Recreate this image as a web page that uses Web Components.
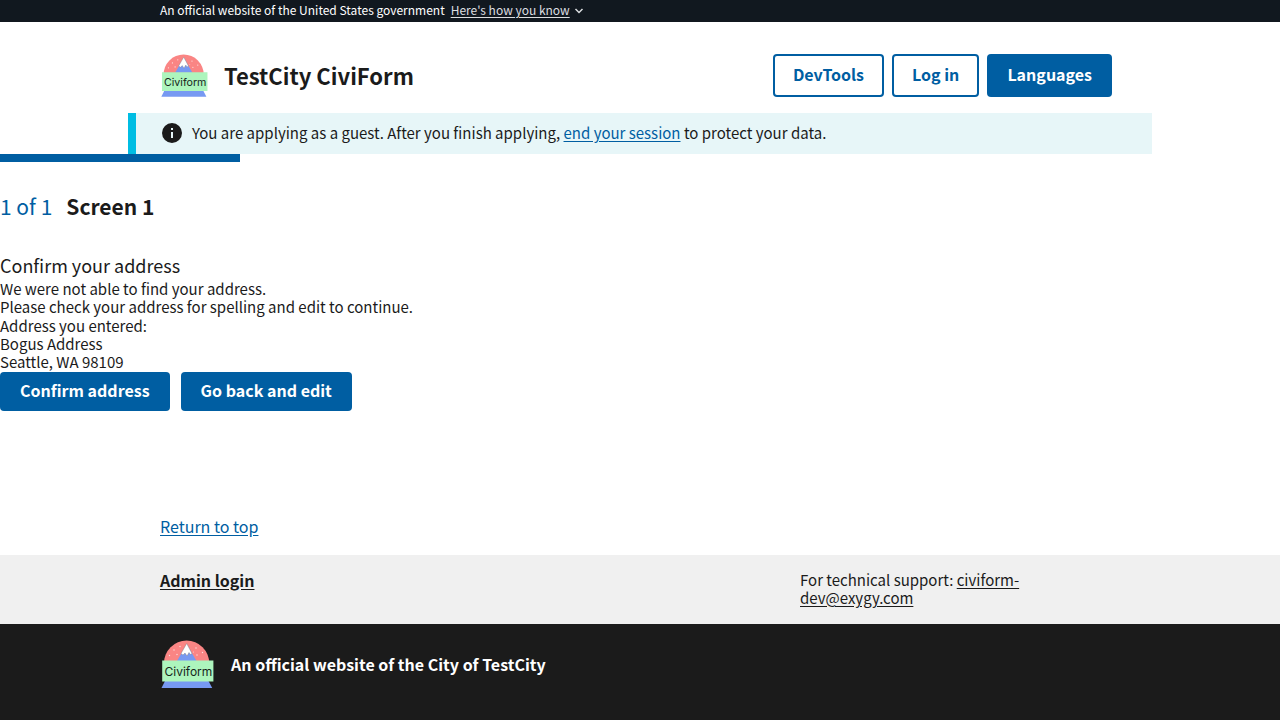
<!DOCTYPE html>
<html lang="en">
<head>
<meta charset="utf-8">
<meta name="viewport" content="width=device-width, initial-scale=1">
<title>TestCity CiviForm</title>
<style>
  html { --primary: #005ea2; --ink: #1b1b1b; }
  body {
    margin: 0;
    color: var(--ink);
    background: #fff;
    font: 15px/18px "Noto Sans CJK JP", "Noto Sans", sans-serif;
  }
</style>
</head>
<body>
<civi-page>
  <gov-banner slot="banner"></gov-banner>
  <site-header slot="header" name="TestCity CiviForm">
    <civi-button outline>DevTools</civi-button>
    <civi-button outline>Log in</civi-button>
    <civi-button>Languages</civi-button>
  </site-header>
  <guest-alert slot="alert"></guest-alert>
  <step-progress current="1" total="1" name="Screen 1"></step-progress>
  <address-confirm>
    <span slot="street">Bogus Address</span>
    <span slot="city">Seattle, WA 98109</span>
  </address-confirm>
  <site-footer slot="footer"></site-footer>
</civi-page>

<script>
function define(name, html) {
  const template = document.createElement('template');
  template.innerHTML = html;
  customElements.define(name, class extends HTMLElement {
    constructor() {
      super();
      const root = this.attachShadow({ mode: 'open' });
      root.append(template.content.cloneNode(true));
      root.querySelectorAll('[data-attr]').forEach(node => {
        node.textContent = this.getAttribute(node.dataset.attr) || '';
      });
    }
  });
}

define('civi-logo', `
  <style>
    :host { display: block; flex: none; width: 48px; }
    svg { display: block; width: 100%; }
    text { font: 12px Inter, sans-serif; fill: #17251c; }
  </style>
  <svg viewBox="0 0 54 48" role="img" aria-label="CiviForm logo">
    <circle cx="26.6" cy="23.2" r="22.6" fill="#fa8584"/>
    <g fill="#fde0df">
      <circle cx="20" cy="6.5" r=".7"/><circle cx="14" cy="10" r=".7"/>
      <circle cx="17" cy="14.5" r=".7"/><circle cx="9.5" cy="15.5" r=".7"/>
      <circle cx="36" cy="8" r=".7"/><circle cx="42.5" cy="12.5" r=".7"/>
      <circle cx="37" cy="15" r=".7"/><circle cx="33.5" cy="12" r=".5"/>
    </g>
    <path d="M26.7 4 17 21h19.500z" fill="#7799f2"/>
    <path d="M26.700 3.500 21 13.500l2 1.500 2-2 2 3 2-3.500 1.500 2 1.500-1z" fill="#fff" stroke="#777" stroke-width=".4"/>
    <path d="M5.500 40h42.500l4.200 8H1.500z" fill="#7799f2"/>
    <path d="M2.200 20.500h51.200v21H2.200z" fill="#adf5bd"/>
    <text x="4.500" y="35.500">Civiform</text>
  </svg>`);

define('civi-button', `
  <style>
    :host { display: block; }
    button {
      display: block;
      padding: 11px 20px 13px;
      border: 0;
      border-radius: 4px;
      background: var(--primary);
      color: #fff;
      font: inherit;
      font-size: 16px;
      font-weight: 700;
      line-height: var(--button-line, 15px);
      white-space: nowrap;
      cursor: pointer;
    }
    :host([outline]) button {
      background: transparent;
      color: var(--primary);
      box-shadow: inset 0 0 0 2px var(--primary);
    }
  </style>
  <button type="button"><slot></slot></button>`);

define('gov-banner', `
  <style>
    :host { display: block; background: #11181f; color: #fff; font-size: 12px; line-height: 16px; }
    .inner {
      display: flex; align-items: center; gap: 6px;
      box-sizing: border-box; max-width: 1024px; margin: 0 auto; padding: 2px 32px 4px;
    }
    button {
      display: flex; align-items: center; gap: 4px;
      padding: 0; border: 0; background: none; color: #dcdee0; font: inherit; cursor: pointer;
    }
    span { text-decoration: underline; text-underline-offset: 2px; }
  </style>
  <div class="inner">
    An official website of the United States government
    <button type="button" aria-expanded="false"><span>Here's how you know</span>
      <svg width="10" height="8" viewBox="0 0 10 8" fill="none" stroke="currentColor" stroke-width="1.500" aria-hidden="true"><path d="m1.500 3 3.500 3.500L8.500 3"/></svg>
    </button>
  </div>`);

define('site-header', `
  <style>
    :host { display: block; }
    header {
      display: flex; align-items: center; justify-content: space-between; flex-wrap: wrap; gap: 16px;
      box-sizing: border-box; max-width: 1024px; margin: 0 auto; padding: 32px 40px 16px 32px;
    }
    a { display: flex; align-items: center; gap: 16px; color: inherit; text-decoration: none; }
    strong { padding-bottom: 2px; font-size: 22px; line-height: 24px; }
    nav { display: flex; gap: 8px; --button-line: 19px; }
  </style>
  <header>
    <a href="#"><civi-logo></civi-logo><strong data-attr="name"></strong></a>
    <nav aria-label="Account"><slot></slot></nav>
  </header>`);

define('guest-alert', `
  <style>
    :host {
      display: block; box-sizing: border-box; max-width: 1024px; margin: 0 auto;
      padding: 7px 24px 9px; border-left: 8px solid #00bde3; background: #e7f6f8; line-height: 25px;
    }
    .row { display: flex; align-items: center; gap: 8px; }
    svg { flex: none; }
    p { margin: 0; }
    a { color: var(--primary); text-underline-offset: 2px; }
  </style>
  <div class="row" role="status">
    <svg width="24" height="24" viewBox="0 0 24 24" fill="#1b1b1b" aria-hidden="true"><path d="M12 2a10 10 0 1 0 0 20 10 10 0 0 0 0-20zm1 15h-2v-6h2zm0-8h-2V7h2z"/></svg>
    <p>You are applying as a guest. After you finish applying, <a href="#">end your session</a> to protect your data.</p>
  </div>`);

define('step-progress', `
  <style>
    :host { display: block; }
    .bar { max-width: 240px; height: 8px; background: var(--primary); }
    h1 { display: flex; align-items: center; gap: 14px; margin: 31px 0 32px; font-size: 21px; line-height: 26px; }
    .count { color: var(--primary); font-weight: 400; }
  </style>
  <div class="bar"></div>
  <h1><span class="count"><span data-attr="current"></span> of <span data-attr="total"></span></span><span data-attr="name"></span></h1>`);

define('address-confirm', `
  <style>
    :host { display: block; }
    h2 { margin: 0 0 1px; font-size: 18px; line-height: 28px; font-weight: 400; }
    p, address { margin: 0; font-style: normal; }
    .entered { padding-top: 1px; }
    slot { display: block; }
    .actions { display: flex; flex-wrap: wrap; gap: 11px; padding-top: 1px; }
  </style>
  <h2>Confirm your address</h2>
  <p>We were not able to find your address.</p>
  <p>Please check your address for spelling and edit to continue.</p>
  <div class="entered">
    <p>Address you entered:</p>
    <address><slot name="street"></slot><slot name="city"></slot></address>
  </div>
  <div class="actions">
    <civi-button>Confirm address</civi-button>
    <civi-button>Go back and edit</civi-button>
  </div>`);

define('site-footer', `
  <style>
    :host { display: flex; flex-direction: column; flex: 1; }
    .inner { box-sizing: border-box; width: 100%; max-width: 1024px; margin: 0 auto; padding: 0 32px; }
    a { color: inherit; text-underline-offset: 2px; }
    .top { padding-bottom: 20px; font-size: 16px; }
    .top a { color: var(--primary); }
    strong { font-size: 16px; }
    .links { background: #f0f0f0; padding: 16px 0 17px; }
    .links .inner { display: grid; grid-template-columns: 2fr 1fr; }
    .identity { flex: 1; background: var(--ink); color: #fff; padding: 16px 0 32px; }
    .identity .inner { display: flex; align-items: center; gap: 17px; }
    civi-logo { width: 54px; }
    p { margin: 0; }
  </style>
  <div class="inner top"><a href="#">Return to top</a></div>
  <div class="links"><div class="inner">
    <strong><a href="#">Admin login</a></strong>
    <p>For technical support: <a href="mailto:civiform-dev@exygy.com">civiform-dev@exygy.com</a></p>
  </div></div>
  <div class="identity"><div class="inner">
    <civi-logo></civi-logo>
    <strong>An official website of the City of TestCity</strong>
  </div></div>`);

define('civi-page', `
  <style>
    :host { display: flex; flex-direction: column; min-height: 100vh; }
    main { padding-bottom: 106px; }
    slot[name=footer] { display: flex; flex: 1; flex-direction: column; }
  </style>
  <slot name="banner"></slot>
  <div><slot name="header"></slot><slot name="alert"></slot></div>
  <main><slot></slot></main>
  <slot name="footer"></slot>`);
</script>
</body>
</html>
